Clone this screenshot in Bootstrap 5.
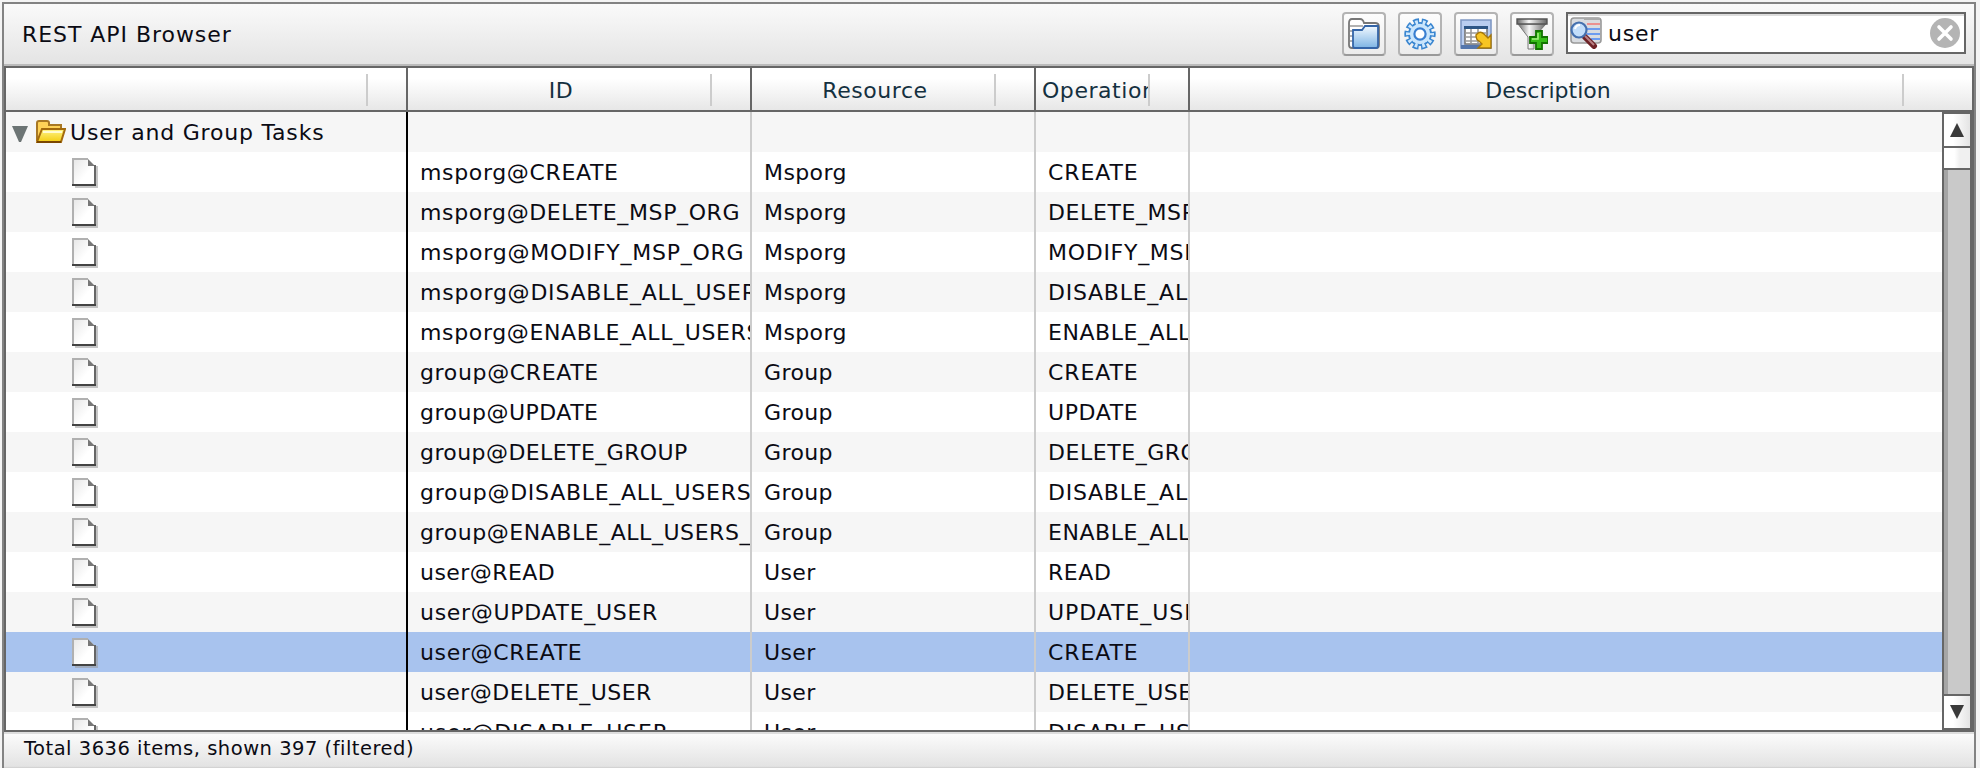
<!DOCTYPE html>
<html lang="en">
<head>
<meta charset="utf-8">
<title>REST API Browser</title>
<link href="https://cdn.jsdelivr.net/npm/bootstrap@5.3.0/dist/css/bootstrap.min.css" rel="stylesheet">
<script src="https://cdn.jsdelivr.net/npm/bootstrap@5.3.0/dist/js/bootstrap.bundle.min.js"></script>
<style>
html{overflow:hidden}
body{height:768px;background:#f4f4f4;font-family:"DejaVu Sans",Verdana,sans-serif;font-size:22px;letter-spacing:.55px;color:#0b0b14;padding:2px 4px 0 2px}
.defs{position:absolute;width:0;height:0}
.win{height:766px;border:2px solid #838383;border-bottom:0;background:#e9e9e9}
.titlebar{height:62px;background:linear-gradient(#fafafa,#e4e4e4);border-bottom:2px solid #bbb;padding:0 8px 0 18px}
.titlebar .title{line-height:40px;padding-top:11px;align-self:flex-start;letter-spacing:.95px}
.tool{width:44px;height:44px;border:2px solid #b4b4b4;border-radius:4px;background:linear-gradient(#fdfdfd,#ececec);border-bottom-color:#999}
.tool svg{width:32px;height:32px}
.tools{gap:12px;padding-top:8px}
.search{width:400px;height:42px;border:2px solid #666;background:#fff;box-shadow:inset 0 2px #ddd}
.search input{border:0;outline:0;background:transparent;letter-spacing:.75px;color:#0b0b14;min-width:0}
.gridbox{height:666px;border:2px solid #666}
.ghead{height:44px;background:linear-gradient(#fff 25%,#e7e7e7);border-bottom:2px solid #666;color:#14303f}
.hc{height:42px;border-right:2px solid #666}
.hc:last-child{border:0}
.hc .cap{border-right:2px solid #ccc;height:32px;line-height:34px;margin:6px 38px 0 0;padding-left:4px;overflow:hidden;white-space:nowrap;text-align:center}
.ghead .last .cap{margin-right:68px;letter-spacing:0}
.c1{width:402px;flex:none}.c2{width:344px;flex:none}.c3{width:284px;flex:none}.c4{width:154px;flex:none}
.rows{height:618px}
.rw{height:40px;line-height:42px;background:#fff;white-space:nowrap}
.rw:nth-child(odd){background:#f6f6f6}
.rw.sel{background:#a8c3ee}
.rw .c{border-right:2px solid #ccc;overflow:hidden;padding-left:12px;height:40px}
.rw .c.c1{border-color:#000;padding-left:6px}
.rw .c.c3{letter-spacing:.4px}
.root-name{letter-spacing:.8px;padding-top:1px}
.doc{margin:1px 0 0 60px}
.sbar{width:30px;border:2px solid #666;background:#c9c9c9;box-shadow:inset 4px 0 #a5a5a5}
.sbtn{height:32px;background:linear-gradient(90deg,#fff 35%,#e4e4e4)}
.sbtn.down{border-top:2px solid #666;height:34px}
.thumb{height:24px;border:2px solid #666;border-width:2px 0;background:linear-gradient(90deg,#fff 40%,#f0f0f0 60%)}
.tri{width:14px;height:14px}
.status{height:36px;border-top:2px solid #ddd;background:linear-gradient(#fbfbfb,#e3e3e3 95%,#ccc);font-size:19.5px;line-height:30px;padding-left:20px;letter-spacing:.5px}
</style>
</head>
<body>
<svg class="defs">
<defs>
<linearGradient id="gb" x1="0" y1="0" x2="0" y2="1"><stop offset="0" stop-color="#f2f9ff"/><stop offset="1" stop-color="#7db4e4"/></linearGradient>
<linearGradient id="gy" x1="0" y1="0" x2="0" y2="1"><stop offset="0" stop-color="#fff58a"/><stop offset="1" stop-color="#f3cd10"/></linearGradient>
<linearGradient id="gd" x1="0" y1="0" x2="1" y2="1"><stop offset="0" stop-color="#e6e6e6"/><stop offset=".6" stop-color="#fff"/></linearGradient>
<linearGradient id="gf" x1="0" y1="0" x2="1" y2="0"><stop offset="0" stop-color="#666"/><stop offset=".4" stop-color="#f8f8f8"/><stop offset="1" stop-color="#666"/></linearGradient>
</defs>
</svg>
<div class="win d-flex flex-column">
  <div class="titlebar d-flex flex-shrink-0">
    <div class="title flex-grow-1">REST API Browser</div>
    <div class="tools d-flex align-items-start">
      <button class="tool btn p-0 d-flex align-items-center justify-content-center" aria-label="Folder"><svg viewBox="0 0 32 32"><path d="M1 27V5q0-4 3-4h8q3 0 4 4h11q4 0 4 4v18q0 3-3 3H4q-3 0-3-3z" fill="#fff" stroke="#777" stroke-width="1.8"/><path d="M2 8h13M2 13h4M2 18h4M2 23h4" stroke="#999" stroke-width="1.4"/><path d="M5 12h9l3-4h13v20q0 2-2 2H7q-2 0-2-2z" fill="url(#gb)" stroke="#3465a8" stroke-width="1.8"/></svg></button>
      <button class="tool btn p-0 d-flex align-items-center justify-content-center" aria-label="Settings"><svg viewBox="0 0 32 32"><circle cx="16" cy="16" r="12.5" fill="none" stroke="#3a86d0" stroke-width="6.4" stroke-dasharray="5.4 2.454" stroke-dashoffset="2.7"/><circle cx="16" cy="16" r="12" fill="#3a86d0"/><circle cx="16" cy="16" r="11.8" fill="none" stroke="#cfe8fd" stroke-width="4.4" stroke-dasharray="2.6 4.814" stroke-dashoffset="1.3"/><circle cx="16" cy="16" r="10.2" fill="#c9e5fc"/><circle cx="16" cy="16" r="5.6" fill="#fff" stroke="#3a7fd0" stroke-width="2.2"/></svg></button>
      <button class="tool btn p-0 d-flex align-items-center justify-content-center" aria-label="Export table"><svg viewBox="0 0 32 32"><path d="M1 2h30v28H1z" fill="#b9cdf0" stroke="#7f98c4" stroke-width="1.6"/><path d="M5 9h22v17H5z" fill="#fff" stroke="#777" stroke-width="1.6"/><path d="M4 8h24v3H4z" fill="#2d5585"/><path d="M5 15h22M5 19h22M5 23h22M11 11v15M18 11v15" stroke="#999" stroke-width="1.6"/><path d="M1 27h30v4H1z" fill="#5476ac"/><path d="M16 17q4-5 8-1l4 4 3-3v13H18l4-4-3-3q-3-1-3-6z" fill="#f7c522" stroke="#a87808" stroke-width="1.4"/></svg></button>
      <button class="tool btn p-0 d-flex align-items-center justify-content-center" aria-label="Add filter"><svg viewBox="0 0 32 32"><path d="M2 6l10 13v12h6V19L30 6z" fill="url(#gf)" stroke="#777"/><path d="M1 1h30v5H1z" fill="url(#gf)" stroke="#555" stroke-width="1.4"/><path d="M20 13h6v6h6v6h-6v6h-6v-6h-6v-6h6z" fill="#36bc18" stroke="#127300" stroke-width="1.8"/><path d="M22 15v6h-6" fill="none" stroke="#a4ef80" stroke-width="1.6"/></svg></button>
      <div class="search d-flex align-items-center">
        <svg width="32" height="32" viewBox="0 0 32 32" class="flex-shrink-0" style="margin-left:2px"><rect x="1" y="1" width="30" height="25" rx="3" fill="#d9dce0" stroke="#999" stroke-width="1.6"/><path d="M14 2h16" stroke="#aaa" stroke-width="2"/><path d="M17 7h13" stroke="#e88" stroke-width="1.8"/><path d="M17 12h13M17 17h13M21 22h9" stroke="#6d9cf0" stroke-width="2"/><path d="M15 20l9 9" stroke="#6d2226" stroke-width="6" stroke-linecap="round"/><path d="M15 19l9 9" stroke="#b98084" stroke-width="2"/><circle cx="9" cy="13" r="7.5" fill="#c3defa" stroke="#4570ae" stroke-width="2.2"/><path d="M5 12q1-4 5-4" fill="none" stroke="#fff" stroke-width="2"/></svg>
        <input class="flex-grow-1 p-0" value="user" aria-label="Search" style="margin-left:6px">
        <svg width="30" height="30" viewBox="0 0 30 30" class="flex-shrink-0" style="margin-right:4px"><circle cx="15" cy="15" r="15" fill="#b4b4b4"/><path d="M9 9l12 12M21 9L9 21" stroke="#fff" stroke-width="3.6" stroke-linecap="round"/></svg>
      </div>
    </div>
  </div>
  <div class="gridbox flex-shrink-0">
    <div class="ghead d-flex">
      <div class="hc c1"><div class="cap"></div></div>
      <div class="hc c2"><div class="cap">ID</div></div>
      <div class="hc c3"><div class="cap">Resource</div></div>
      <div class="hc c4"><div class="cap" style="text-align:left;padding-left:6px">Operation</div></div>
      <div class="hc last flex-grow-1"><div class="cap">Description</div></div>
    </div>
    <div class="rows d-flex">
      <div class="flex-grow-1 overflow-hidden" id="rows"></div>
      <div class="sbar d-flex flex-column">
        <div class="sbtn d-flex align-items-center justify-content-center"><svg class="tri" viewBox="0 0 14 14"><path d="M7 0l7 14H0z" fill="#3a3a3a"/></svg></div>
        <div class="thumb"></div>
        <div class="flex-grow-1"></div>
        <div class="sbtn down d-flex align-items-center justify-content-center"><svg class="tri" viewBox="0 0 14 14"><path d="M0 0h14L7 14z" fill="#3a3a3a"/></svg></div>
      </div>
    </div>
  </div>
  <div class="status flex-shrink-0">Total 3636 items, shown 397 (filtered)</div>
</div>
<script>
// id, resource, letter spacing of the id, letter spacing of the operation
const data = [
 ['msporg@CREATE','Msporg',.65,.9],['msporg@DELETE_MSP_ORG','Msporg',.62,.6],['msporg@MODIFY_MSP_ORG','Msporg',.75,.72],
 ['msporg@DISABLE_ALL_USERS','Msporg',.78,.75],['msporg@ENABLE_ALL_USERS','Msporg',.64,.55],
 ['group@CREATE','Group',.65,.9],['group@UPDATE','Group',.5,.6],['group@DELETE_GROUP','Group',.42,.55],
 ['group@DISABLE_ALL_USERS_','Group',.72,.75],['group@ENABLE_ALL_USERS_','Group',.55,.55],
 ['user@READ','User',.45,.55],['user@UPDATE_USER','User',.7,.95],['user@CREATE','User',.65,.9],['user@DELETE_USER','User',.45,.55],['user@DISABLE_USER','User',.85,.75]];
const doc = '<svg class="doc" width="26" height="30" viewBox="0 0 26 30"><path d="M3 28.5h22V8" fill="none" stroke="#999" stroke-opacity=".55" stroke-width="3"/><path d="M1 1h15l7 7v19H1z" fill="url(#gd)"/><path d="M1 27V1h15" fill="none" stroke="#b0b0b0" stroke-width="2"/><path d="M16 1v7h7z" fill="#777"/><path d="M23 7v20" stroke="#666" stroke-width="2"/><path d="M0 27h24" stroke="#444" stroke-width="2"/></svg>';
const folder = '<svg width="30" height="24" viewBox="0 0 30 24" style="margin:0 4px 0 8px"><path d="M1 21V3q0-2 2-2h8q2 0 2 2v2h12v6" fill="#ffd257" stroke="#a87824" stroke-width="2"/><path d="M1 22L6 9h23l-4 13z" fill="url(#gy)" stroke="#a36a0c" stroke-width="2"/><path d="M7 12h19" stroke="#fffbd0" stroke-width="2"/><path d="M1 22h24" stroke="#7a4600" stroke-width="2"/></svg>';
const row = (a,b,c,d,sel,s2,s4) => `<div class="rw d-flex${sel?' sel':''}"><div class="c c1 d-flex align-items-center">${a}</div><div class="c c2" style="letter-spacing:${s2}px">${b}</div><div class="c c3">${c}</div><div class="c c4" style="letter-spacing:${s4}px">${d}</div></div>`;
document.getElementById('rows').innerHTML =
 row('<svg width="16" height="16" viewBox="0 0 16 16" style="margin-top:3px"><path d="M0 0h16L9 16H7z" fill="#6c7474"/></svg>'+folder+'<span class="root-name">User and Group Tasks</span>','','','',false,0,0) +
 data.map(([id,r,s2,s4]) => row(doc,id,r,id.split('@')[1],id==='user@CREATE',s2,s4)).join('');
</script>
</body>
</html>
